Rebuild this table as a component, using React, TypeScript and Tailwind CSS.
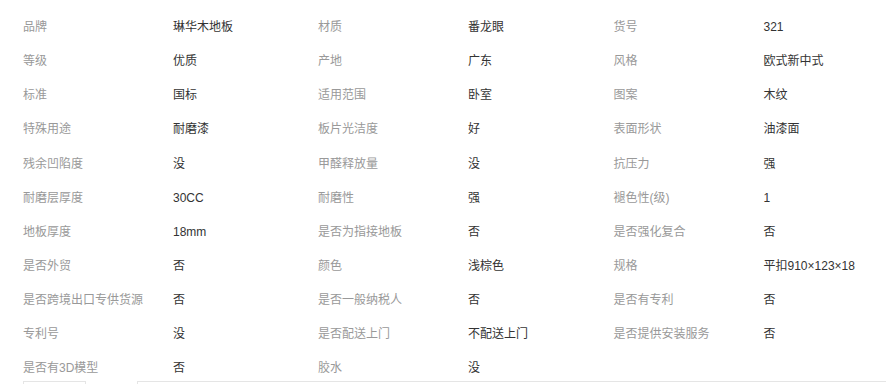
import React from "react";

const rows: [string, string, string, string, string, string][] = [
  ["品牌", "琳华木地板", "材质", "番龙眼", "货号", "321"],
  ["等级", "优质", "产地", "广东", "风格", "欧式新中式"],
  ["标准", "国标", "适用范围", "卧室", "图案", "木纹"],
  ["特殊用途", "耐磨漆", "板片光洁度", "好", "表面形状", "油漆面"],
  ["残余凹陷度", "没", "甲醛释放量", "没", "抗压力", "强"],
  ["耐磨层厚度", "30CC", "耐磨性", "强", "褪色性(级)", "1"],
  ["地板厚度", "18mm", "是否为指接地板", "否", "是否强化复合", "否"],
  ["是否外贸", "否", "颜色", "浅棕色", "规格", "平扣910×123×18"],
  ["是否跨境出口专供货源", "否", "是否一般纳税人", "否", "是否有专利", "否"],
  ["专利号", "没", "是否配送上门", "不配送上门", "是否提供安装服务", "否"],
  ["是否有3D模型", "否", "胶水", "没", "", ""],
];

export default function App() {
  return (
    <div
      className="w-[886px] h-[385px] bg-white overflow-hidden text-[12px]"
      style={{ fontFamily: '"Liberation Sans", "Noto Sans CJK SC", sans-serif' }}
    >
      <div className="pt-[18px] pl-[23px] flex flex-col gap-[16.15px]">
        {rows.map((r, i) => (
          <div
            key={i}
            className="grid grid-cols-[150px_145px_150px_145.5px_150px_1fr] h-[18px] leading-[18px] whitespace-nowrap"
          >
            <div className="text-[#999999]">{r[0]}</div>
            <div className="text-[#333333]">{r[1]}</div>
            <div className="text-[#999999]">{r[2]}</div>
            <div className="text-[#333333]">{r[3]}</div>
            <div className="text-[#999999]">{r[4]}</div>
            <div className="text-[#333333]">{r[5]}</div>
          </div>
        ))}
      </div>
      <div className="mt-[4px] flex h-[3px]">
        <div className="ml-[23px] w-[63px] border-t border-x border-[#e5e5e5]" />
        <div className="ml-[51px] flex-1 border-t border-l border-[#e5e5e5]" />
      </div>
    </div>
  );
}
